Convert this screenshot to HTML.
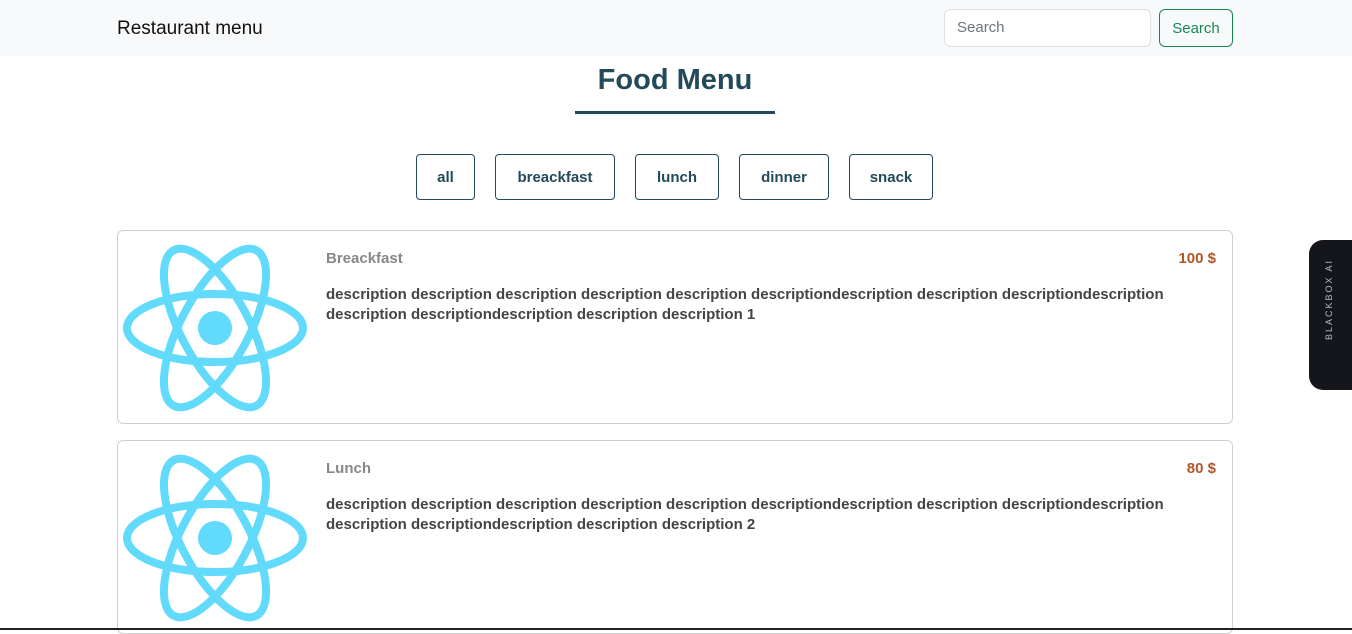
<!DOCTYPE html>
<html><head><style>
body{margin:0;width:1352px;height:630px;overflow:hidden;font-family:"Liberation Sans",sans-serif;background:#fff;position:relative}
.nav{height:56px;background:#f8f9fa;position:relative}
.brand{position:absolute;left:117px;top:18px;font-size:19px;color:#111}
.inp{position:absolute;left:944px;top:9px;border:1px solid #dee2e6;border-radius:6px;background:#fff;box-sizing:border-box;width:207px;height:38px;padding:0 12px;line-height:36px;font-size:15px;color:#6c757d}
.sbtn{position:absolute;left:1159px;top:9px;width:74px;height:38px;box-sizing:border-box;border:1px solid #198754;border-radius:6px;color:#198754;font-size:15px;text-align:center;line-height:38px}
h1{position:absolute;left:0;width:1350px;text-align:center;top:64px;margin:0;font-size:29px;color:#234a5a;font-weight:bold}
.ul{position:absolute;left:575px;top:111px;width:200px;height:3px;background:#234a5a}
.b{position:absolute;top:154px;height:46px;box-sizing:border-box;border:1px solid #234a5a;border-radius:4px;color:#234a5a;font-weight:bold;font-size:15px;text-align:center;line-height:46px}
.card{position:absolute;left:117px;width:1116px;height:194px;box-sizing:border-box;border:1px solid #d0d0d0;border-radius:6px;overflow:hidden}
.card svg{position:absolute;left:4px;top:12px}
.t{position:absolute;left:208px;top:19px;font-size:15px;color:#888;font-weight:bold}
.p{position:absolute;right:16px;top:19px;font-size:15px;color:#b5562a;font-weight:bold}
.d{position:absolute;left:208px;top:54px;right:20px;font-size:15px;line-height:20px;color:#444;font-weight:bold}
.bb{position:absolute;left:1309px;top:240px;width:43px;height:150px;background:#14161c;border-radius:14px 0 0 14px}
.bb span{position:absolute;left:15px;top:100px;transform:rotate(-90deg);transform-origin:0 0;color:#bbb;font-size:9px;letter-spacing:2px;white-space:nowrap}
</style></head><body>
<div class="nav"><div class="brand">Restaurant menu</div><div class="inp">Search</div><div class="sbtn">Search</div></div>
<h1>Food Menu</h1><div class="ul"></div>
<div class="b" style="left:416px;width:59px">all</div>
<div class="b" style="left:495px;width:120px">breackfast</div>
<div class="b" style="left:635px;width:84px">lunch</div>
<div class="b" style="left:739px;width:90px">dinner</div>
<div class="b" style="left:849px;width:84px">snack</div>
<div class="card" style="top:230px">
<svg width="186" height="170" viewBox="-93 -85 186 170"><g fill="none" stroke="#61dafb" stroke-width="8"><ellipse rx="88" ry="34"/><ellipse rx="88" ry="34" transform="rotate(62)"/><ellipse rx="88" ry="34" transform="rotate(118)"/></g><circle r="17" fill="#61dafb"/></svg>
<div class="t">Breackfast</div><div class="p">100 $</div>
<div class="d">description description description description description descriptiondescription description descriptiondescription description descriptiondescription description description 1</div></div>
<div class="card" style="top:440px">
<svg width="186" height="170" viewBox="-93 -85 186 170"><g fill="none" stroke="#61dafb" stroke-width="8"><ellipse rx="88" ry="34"/><ellipse rx="88" ry="34" transform="rotate(62)"/><ellipse rx="88" ry="34" transform="rotate(118)"/></g><circle r="17" fill="#61dafb"/></svg>
<div class="t">Lunch</div><div class="p">80 $</div>
<div class="d">description description description description description descriptiondescription description descriptiondescription description descriptiondescription description description 2</div></div>
<div class="bb"><span>BLACKBOX AI</span></div>
<div style="position:absolute;left:0;top:628px;width:1352px;height:2px;background:#222"></div>
</body></html>
